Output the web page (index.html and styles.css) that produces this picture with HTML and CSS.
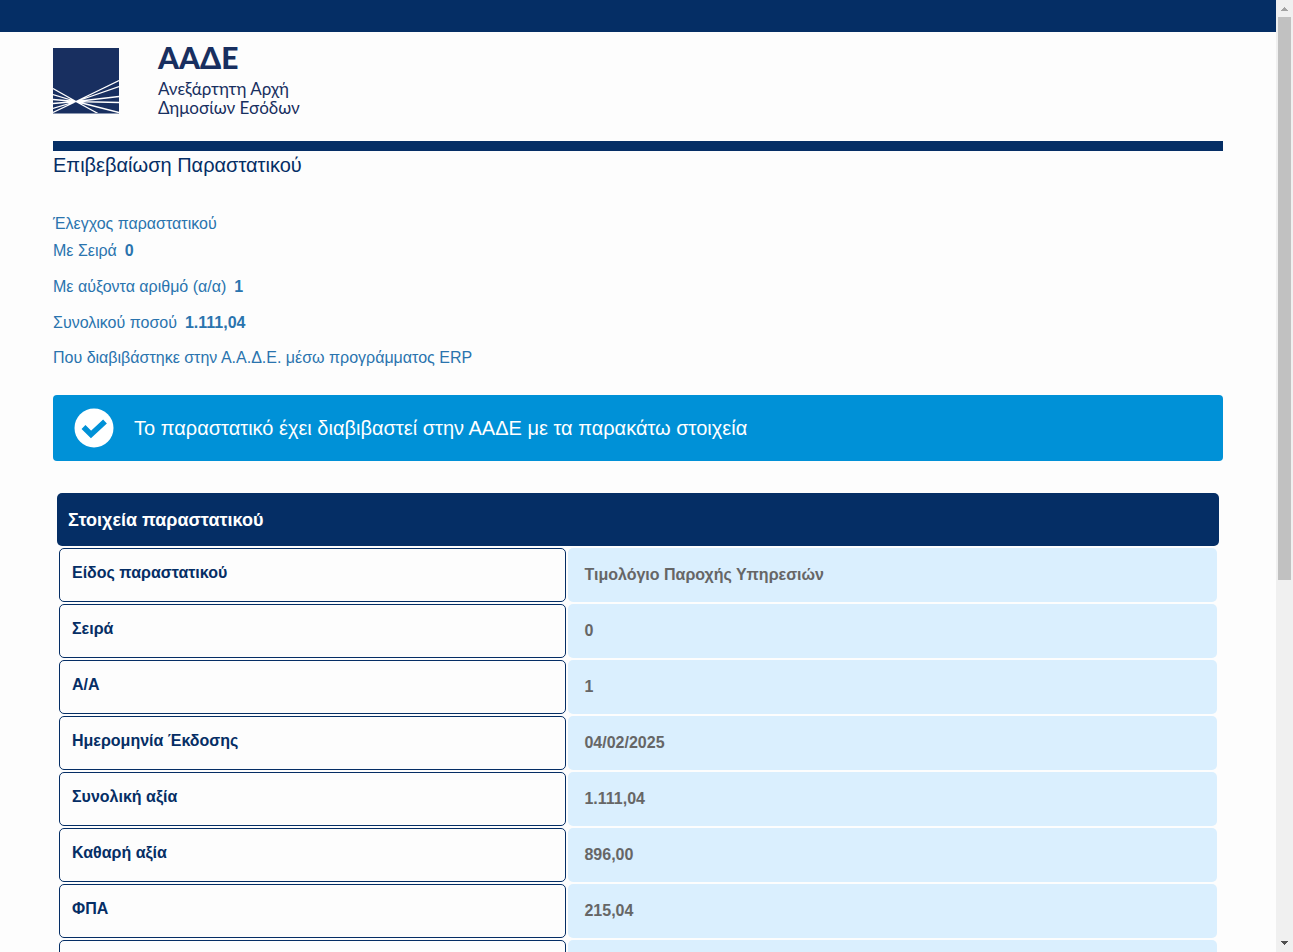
FILE: index.html
```html
<!DOCTYPE html>
<html lang="el">
<head>
<meta charset="utf-8">
<meta name="viewport" content="width=device-width, initial-scale=1">
<title>Επιβεβαίωση Παραστατικού</title>
<link rel="stylesheet" href="styles.css">
</head>
<body>
<div class="window">
  <div class="page">
    <div class="topbar"></div>
    <main class="container">
      <header class="brand">
        <svg class="brand-mark" viewBox="0 0 66 66" aria-hidden="true">
          <rect width="66" height="66" fill="#182f60"/>
          <g stroke="#fff" stroke-width="1.3" fill="none">
            <path d="M23 53.500L0 40.500M23 53.500L0 46.500M23 53.500L0 51.500M23 53.500L0 55.500M23 53.500L0 60.500M23 53.500L0 64.500"/>
            <path d="M23 53.500L66 32.500M23 53.500L66 38.500M23 53.500L66 48.500M23 53.500L66 54.500M23 53.500L66 64.500M23 53.500L45 65.500"/>
          </g>
          <path d="M0 65.500H66" stroke="#8b97b0"/>
        </svg>
        <div class="brand-text">
          <div class="brand-name">ΑΑΔΕ</div>
          <div class="brand-sub">Ανεξάρτητη Αρχή<br>Δημοσίων Εσόδων</div>
        </div>
      </header>
      <h1 class="title">Επιβεβαίωση Παραστατικού</h1>
      <section class="check">
        <p class="check-intro">Έλεγχος παραστατικού</p>
        <div class="field"><label for="series">Με Σειρά</label><input id="series" type="text" value="0" readonly></div>
        <div class="field"><label for="number">Με αύξοντα αριθμό (α/α)</label><input id="number" type="text" value="1" readonly></div>
        <div class="field"><label for="total">Συνολικού ποσού</label><input id="total" type="text" value="1.111,04" readonly></div>
        <p class="check-source">Που διαβιβάστηκε στην Α.Α.Δ.Ε. μέσω προγράμματος ERP</p>
      </section>
      <div class="notice" role="status">
        <svg class="notice-icon" viewBox="0 0 40 40" aria-hidden="true">
          <circle cx="20" cy="20" r="19.500" fill="#fff"/>
          <path d="M9.500 19L17 26.500L31 13.500" fill="none" stroke="#0091d7" stroke-width="5.500"/>
        </svg>
        <span>Το παραστατικό έχει διαβιβαστεί στην ΑΑΔΕ με τα παρακάτω στοιχεία</span>
      </div>
      <section class="details">
        <h2 class="details-title">Στοιχεία παραστατικού</h2>
        <table class="data">
          <tbody>
            <tr><th scope="row">Είδος παραστατικού</th><td>Τιμολόγιο Παροχής Υπηρεσιών</td></tr>
            <tr><th scope="row">Σειρά</th><td>0</td></tr>
            <tr><th scope="row">Α/Α</th><td>1</td></tr>
            <tr><th scope="row">Ημερομηνία Έκδοσης</th><td>04/02/2025</td></tr>
            <tr><th scope="row">Συνολική αξία</th><td>1.111,04</td></tr>
            <tr><th scope="row">Καθαρή αξία</th><td>896,00</td></tr>
            <tr><th scope="row">ΦΠΑ</th><td>215,04</td></tr>
            <tr><th scope="row"></th><td></td></tr>
          </tbody>
        </table>
      </section>
    </main>
  </div>
  <div class="scrollbar" aria-hidden="true">
    <svg class="arrow arrow-up" viewBox="0 0 7 4"><path d="M0 4V3H1V2H2V1H3V0H4V1H5V2H6V3H7V4Z"/></svg>
    <div class="track"><div class="thumb"></div></div>
    <svg class="arrow" viewBox="0 0 7 4"><path d="M0 0V1H1V2H2V3H3V4H4V3H5V2H6V1H7V0Z"/></svg>
  </div>
</div>
</body>
</html>
```
FILE: styles.css
```css
* {
  box-sizing: border-box;
}

body {
  margin: 0;
  background: #fdfdfd;
  font-family: "Liberation Sans", Arial, sans-serif;
  font-size: 16px;
  line-height: 20px;
  color: #052e65;
}

.window {
  display: flex;
  height: 100vh;
  overflow: hidden;
}

.page {
  flex: 1;
  min-width: 0;
  overflow: hidden;
}

.topbar {
  height: 32px;
  background: #052e65;
}

.container {
  max-width: 1170px;
  margin: 0 auto;
}

.brand {
  display: flex;
  align-items: flex-start;
  gap: 39px;
  padding: 16px 0 24px;
  border-bottom: 10px solid #052e65;
  color: #182f60;
}

.brand-mark {
  width: 66px;
  height: 66px;
}

.brand-text {
  font-family: Lato, "Open Sans", sans-serif;
}

.brand-name {
  font-size: 30px;
  font-weight: 900;
  line-height: 18px;
  margin-bottom: 13px;
}

.brand-sub {
  font-size: 17px;
  line-height: 19px;
}

.title {
  margin: 0;
  font-size: 20px;
  font-weight: 400;
  line-height: 28px;
}

.check {
  padding-top: 35px;
  color: #2a74ae;
}

.check p {
  margin: 0;
}

.check-intro {
  padding-bottom: 4px;
}

.field {
  display: flex;
  gap: 6px;
  padding-bottom: 10px;
  line-height: 26px;
}

.field input {
  width: 220px;
  height: 26px;
  padding: 0 2px;
  border: 0;
  background: transparent;
  color: inherit;
  font: bold 16px "Liberation Sans", Arial, sans-serif;
}

.check .check-source {
  padding-top: 2px;
}

.notice {
  display: flex;
  align-items: center;
  gap: 20px;
  min-height: 66px;
  margin-top: 27px;
  padding: 0 21px;
  border-radius: 4px;
  background: #0091d7;
  color: #fff;
  font-size: 20px;
}

.notice-icon {
  width: 40px;
  height: 40px;
}

.details {
  padding: 32px 4px 0;
}

.details-title {
  margin: 0;
  padding: 17px 11px 16px;
  border-radius: 5px;
  background: #052e65;
  color: #fff;
  font-size: 18px;
  line-height: 20px;
}

.data {
  width: 100%;
  table-layout: fixed;
  border-collapse: separate;
  border-spacing: 2px;
}

.data th,
.data td {
  height: 54px;
  border-radius: 5px;
  font-weight: 700;
  text-align: left;
  vertical-align: top;
}

.data th {
  width: 43.9%;
  padding: 14px 12px;
  border: 1px solid #052e65;
}

.data td {
  padding: 17px 16px;
  background: #daeffe;
  color: #666;
}

.scrollbar {
  display: flex;
  flex-direction: column;
  align-items: center;
  width: 17px;
  padding: 7px 0;
  background: #f0f0f0;
}

.track {
  flex: 1;
  width: 13px;
  margin: 6px 0;
}

.thumb {
  height: 61.3%;
  background: #c1c1c1;
}

.arrow {
  width: 7px;
  height: 4px;
  fill: #505050;
}

.arrow-up {
  fill: #a3a3a3;
}
```
